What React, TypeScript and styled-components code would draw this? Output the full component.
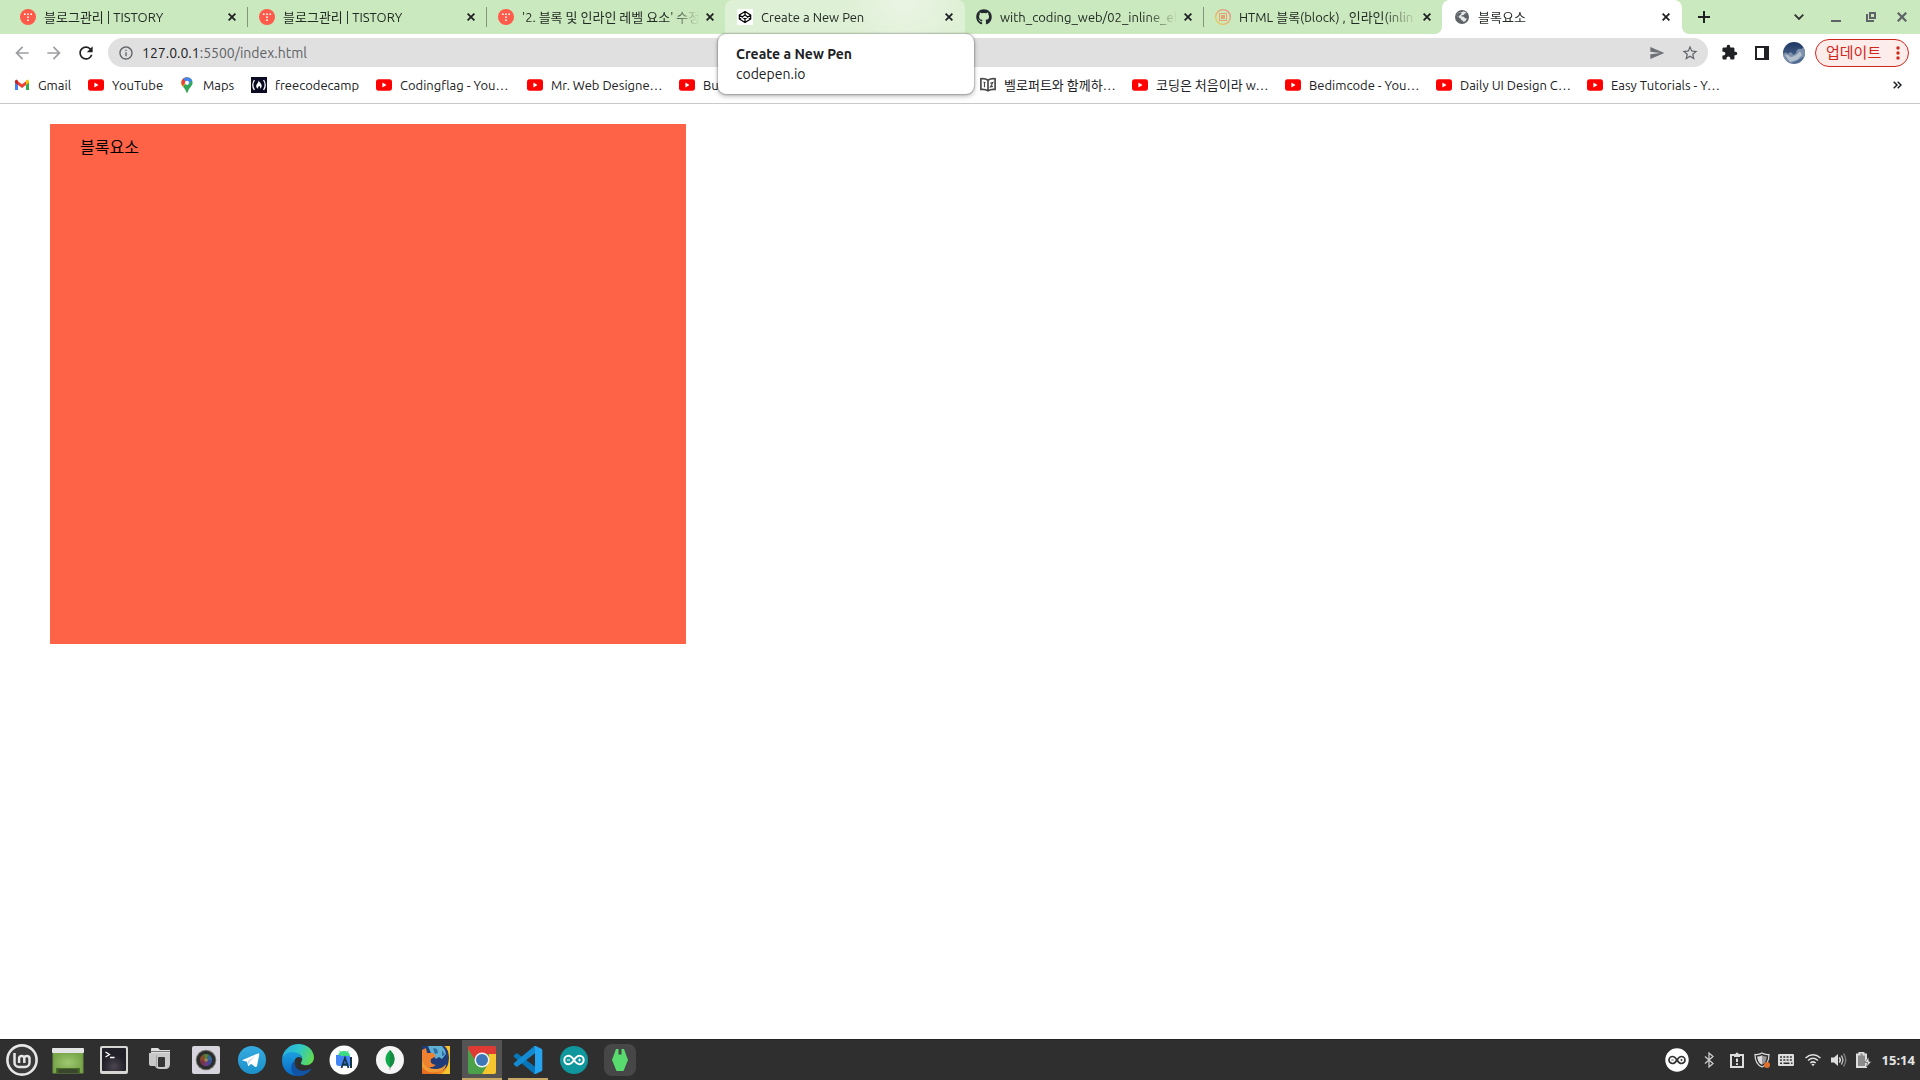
import React from "react";
import styled, { createGlobalStyle, css } from "styled-components";
import { FaGithub } from "react-icons/fa";
import {
  MdArrowBack,
  MdArrowForward,
  MdRefresh,
  MdInfoOutline,
  MdSend,
  MdStarBorder,
  MdExtension,
} from "react-icons/md";

const uiFont = `Ubuntu, "Noto Sans", "Noto Sans CJK KR", sans-serif`;

const GlobalStyle = createGlobalStyle`
  *, *::before, *::after { box-sizing: border-box; }
  body { margin: 0; background: #fff; font-family: ${uiFont}; color: #202124; overflow: hidden; }
  button { margin: 0; padding: 0; border: 0; background: none; color: inherit; font: inherit; }
  a { color: inherit; text-decoration: none; }
  svg { display: block; flex: none; }
`;

const Desktop = styled.div`
  display: flex;
  flex-direction: column;
  min-height: 100vh;
`;

/* ---------- tab strip ---------- */

const TabStrip = styled.header`
  display: flex;
  align-items: stretch;
  height: 34px;
  padding-left: 8px;
  background: #cbe9be;
`;

type TabState = "idle" | "hover" | "active";

const tabStates = {
  idle: css``,
  hover: css`
    background: radial-gradient(circle at 75% 0, #ebf5e4 0, #def0d6 60px);
  `,
  active: css`
    background: #fff;
    &::before,
    &::after {
      content: "";
      position: absolute;
      bottom: 0;
      width: 8px;
      height: 8px;
    }
    &::before {
      right: 100%;
      background: radial-gradient(circle at 0 0, transparent 8px, #fff 8px);
    }
    &::after {
      left: 100%;
      background: radial-gradient(circle at 100% 0, transparent 8px, #fff 8px);
    }
  `,
};

const TabItem = styled.div<{ $state: TabState; $divider?: boolean }>`
  position: relative;
  display: flex;
  align-items: center;
  gap: 2px;
  flex: 0 1 240px;
  min-width: 0;
  margin-right: -1px;
  padding: 0 8px 0 12px;
  border-radius: 8px 8px 0 0;
  ${(p) => tabStates[p.$state]}
  ${(p) =>
    p.$divider &&
    css`
      border-radius: 0;
      background: linear-gradient(#82967a, #82967a) right center / 1px 20px no-repeat;
    `}
`;

const TabButton = styled.button`
  display: flex;
  align-items: center;
  gap: 8px;
  flex: 1;
  min-width: 0;
  height: 34px;
  text-align: left;
  font-size: 13px;
  line-height: 18px;
  color: #232a24;
`;

const TabTitle = styled.span`
  flex: 1;
  min-width: 0;
  overflow: hidden;
  white-space: nowrap;
  mask-image: linear-gradient(to left, transparent, #000 32px);
`;

const IconButton = styled.button<{ $size: number; $color?: string }>`
  display: grid;
  place-items: center;
  flex: none;
  width: ${(p) => p.$size}px;
  height: ${(p) => p.$size}px;
  color: ${(p) => p.$color ?? "#202124"};
`;

const NewTab = styled.div`
  display: flex;
  align-items: center;
  padding-left: 9px;
`;

const WindowControls = styled.div`
  display: flex;
  align-items: center;
  gap: 1px;
  margin-left: auto;
  padding-right: 2px;
`;

const HoverCard = styled.div`
  position: absolute;
  top: 34px;
  left: -7px;
  z-index: 2;
  width: 256px;
  padding: 10px 18px;
  border-radius: 8px;
  background: #fff;
  box-shadow: 0 0 2px rgba(0, 0, 0, 0.6), 0 2px 5px rgba(0, 0, 0, 0.3);
  font-size: 14px;
  line-height: 20px;
  white-space: nowrap;
`;

const CardTitle = styled.strong`
  display: block;
`;

/* ---------- toolbar ---------- */

const Toolbar = styled.nav`
  display: flex;
  align-items: center;
  height: 37px;
  padding: 0 11px 0 6px;
`;

const AddressBar = styled.form`
  display: flex;
  align-items: center;
  flex: 1;
  height: 29px;
  margin: 0 5px 0 6px;
  padding: 0 2px 0 10px;
  border-radius: 15px;
  background: #e0e0e0;
  font-size: 14px;
  line-height: 18px;
  color: #5f6368;
`;

const Host = styled.label`
  margin-left: 8px;
  color: #202124;
`;

const AddressInput = styled.input`
  flex: 1;
  min-width: 0;
  height: 18px;
  padding: 0;
  border: 0;
  outline: 0;
  background: none;
  font: inherit;
  color: inherit;
`;

const UpdateButton = styled.button`
  display: flex;
  align-items: center;
  justify-content: space-between;
  width: 94px;
  height: 28px;
  margin-left: 5px;
  padding: 0 8px 0 10px;
  border: 1px solid #d0271d;
  border-radius: 14px;
  background: #fcecea;
  color: #d0271d;
  font-size: 15px;
  line-height: 20px;
`;

/* ---------- bookmarks ---------- */

const Bookmarks = styled.nav`
  display: flex;
  align-items: center;
  height: 33px;
  padding: 0 13px 4px 14px;
  border-bottom: 1px solid #c9c9c9;
`;

const Bookmark = styled.a<{ $width: number }>`
  display: flex;
  align-items: center;
  gap: 8px;
  flex: 0 0 ${(p) => p.$width}px;
  font-size: 13px;
  line-height: 18px;
  white-space: nowrap;
`;

const Overflow = styled(IconButton)`
  margin-left: auto;
`;

/* ---------- page ---------- */

const Page = styled.main`
  flex: 1;
  padding: 20px 50px;
`;

const Block = styled.div`
  width: 636px;
  height: 520px;
  padding: 10px 30px;
  background: tomato;
  color: #000;
  font-size: 16px;
  line-height: 26px;
`;

/* ---------- taskbar ---------- */

const Taskbar = styled.footer`
  display: flex;
  align-items: stretch;
  height: 41px;
  border-top: 1px solid #242424;
  background: #2f2f2f;
`;

const Launchers = styled.div`
  display: flex;
  gap: 6px;
  padding-left: 2px;
`;

const Launcher = styled.button<{ $open?: boolean; $focused?: boolean }>`
  display: grid;
  place-items: center;
  width: 40px;
  height: 40px;
  background: ${(p) => (p.$focused ? "#545454" : "none")};
  box-shadow: ${(p) => (p.$open ? "inset 0 -2px #c8a767" : "none")};
`;

const Tray = styled.div`
  display: flex;
  align-items: center;
  margin-left: auto;
  padding-right: 5px;
`;

const TrayButton = styled.button<{ $width: number }>`
  display: grid;
  place-items: center;
  width: ${(p) => p.$width}px;
  height: 40px;
`;

const Clock = styled.time`
  margin-left: 5px;
  color: #e4e4e4;
  font-family: "Noto Sans", sans-serif;
  font-size: 13px;
  font-weight: 700;
  line-height: 18px;
`;

/* ---------- drawings ---------- */

const Close = ({ s = 8, w = 1.8 }: { s?: number; w?: number }) => (
  <svg width={s} height={s} viewBox="0 0 8 8">
    <path d="M.6.6l6.8 6.8M7.4.6L.6 7.4" stroke="currentColor" strokeWidth={w} />
  </svg>
);

const Tistory = () => (
  <svg width="16" height="16" viewBox="0 0 16 16">
    <circle cx="8" cy="8" r="8" fill="#ff5a4a" />
    <g fill="#fff">
      <circle cx="4.8" cy="5.2" r=".9" />
      <circle cx="8" cy="5.2" r=".9" />
      <circle cx="11.2" cy="5.2" r=".9" />
      <circle cx="8" cy="8.2" r=".9" />
      <circle cx="8" cy="11.2" r=".9" />
    </g>
  </svg>
);

const CodepenIcon = () => (
  <svg width="16" height="16" viewBox="0 0 16 16">
    <rect width="16" height="16" rx="1" fill="#fff" />
    <path
      d="M8 2.4l5.7 3.7v3.8L8 13.6 2.3 9.9V6.1zM8 2.4v3.7M8 9.9v3.7M2.3 6.1L8 9.9l5.7-3.8M2.3 9.9L8 6.1l5.7 3.8"
      fill="none"
      stroke="#000"
      strokeWidth="1.2"
      strokeLinejoin="round"
    />
  </svg>
);

const Globe = () => (
  <svg width="16" height="16" viewBox="0 0 16 16">
    <circle cx="8" cy="8" r="7" fill="#5f6368" />
    <path
      d="M9 2.5q2.500-.2 3.500 1.500Q10.500 4 10 5.500 9.500 6.500 8 6.300 6.800 6.500 7.500 7.500q2.500-.5 3 1 .3 1.200 2.500.8-.7 2.700-3.500 3.700-.3-1.500-1.700-1.700-1-.2-.8-1.600Q5.500 9 4.500 8L2.600 6.800Q3 4 5.500 2.900 7 4.500 9 2.500z"
      fill="#fff"
      opacity=".85"
    />
    <path d="M4.500 3.800Q7 3 7.500 5 5.500 6 4.500 8L2.300 6.500z" fill="#5f6368" />
  </svg>
);

const BlogIcon = () => (
  <svg width="16" height="16" viewBox="0 0 16 16">
    <defs>
      <linearGradient id="blog" x1="1" y1="0" x2="0" y2="1">
        <stop offset="0" stopColor="#e8808a" />
        <stop offset="1" stopColor="#e8d44c" />
      </linearGradient>
    </defs>
    <circle cx="8" cy="8" r="7.4" fill="none" stroke="url(#blog)" strokeWidth="1.2" />
    <rect x="4.5" y="4.5" width="7" height="7" fill="none" stroke="#e9a06f" />
    <rect x="6" y="6" width="4" height="4" fill="#e9a06f" />
  </svg>
);

const YouTube = () => (
  <svg width="16" height="16" viewBox="0 0 16 16">
    <rect y="2.3" width="16" height="11.4" rx="2.6" fill="red" />
    <path d="M6.4 5.6v4.8L10.5 8z" fill="#fff" />
  </svg>
);

const Gmail = () => (
  <svg width="16" height="16" viewBox="0 0 16 16">
    <path d="M1 4.2V13h3V7z" fill="#4285f4" />
    <path d="M12 7v6h3V4.2z" fill="#34a853" />
    <path d="M12 4.5V8l3-2.3V4.4c0-1.5-1.6-2-2.5-1.3z" fill="#fbbc04" />
    <path d="M1 5.7L4 8V4.5l-.5-1.4C2.5 2.4 1 2.9 1 4.4z" fill="#c5221f" />
    <path d="M4 8V4.2l4 3 4-3V8l-4 3z" fill="#ea4335" />
  </svg>
);

const Maps = () => (
  <svg width="16" height="16" viewBox="0 0 16 16">
    <defs>
      <clipPath id="pin">
        <path d="M8 .2a5.6 5.6 0 0 1 5.6 5.6C13.6 9.2 10 10.5 8.7 15.3q-.7 1-1.4 0C6 10.5 2.4 9.2 2.4 5.8A5.6 5.6 0 0 1 8 .2z" />
      </clipPath>
    </defs>
    <g clipPath="url(#pin)">
      <rect width="16" height="16" fill="#34a853" />
      <path d="M0 13L14 0H0z" fill="#fbbc04" />
      <path d="M0 7.5L3.5 9 8 4V0H0z" fill="#ea4335" />
      <path d="M4 1.5L8 6l8-4V0H4z" fill="#4285f4" />
      <path d="M11 2l-4 5 1 2 4-4z" fill="#4285f4" />
    </g>
    <circle cx="8" cy="5.8" r="2.1" fill="#fff" />
  </svg>
);

const FreeCodeCamp = () => (
  <svg width="16" height="16" viewBox="0 0 16 16">
    <rect width="16" height="16" fill="#0a0a23" />
    <path d="M3.4 3Q.2 8 3.4 13M12.6 3q3.2 5 0 10" fill="none" stroke="#fff" strokeWidth="1.3" />
    <path d="M7.4 3.5c1 2 3.3 2.8 3.3 5.3 0 1.5-.8 2.5-1.7 3 .6-1.2 0-2.3-.9-3-.4 1-1.5 1.6-.9 3-1.3-.4-2-1.6-2-2.8 0-2 2.6-3 2.2-5.5z" fill="#fff" />
  </svg>
);

const Book = () => (
  <svg width="16" height="16" viewBox="0 0 16 16">
    <path d="M8 3.2C6 1.8 3.5 1.5.9 1.8v10.6c2.6-.3 5 0 7.1 1.3 2.1-1.3 4.5-1.6 7.1-1.3V1.8C12.5 1.5 10 1.8 8 3.2zm0 0v10.5" fill="none" stroke="#4a4a4a" strokeWidth="1.7" />
    <path d="M3.5 5l2 .8M4.5 5.5v4.8M10.3 6.2l2.5-.8-2.3 4.5 2.5-.5" fill="none" stroke="#4a4a4a" strokeWidth="1.2" />
  </svg>
);

const SidePanel = () => (
  <svg width="14" height="14" viewBox="0 0 14 14">
    <path fillRule="evenodd" d="M0 0h14v14H0zM2 2v10h7V2z" fill="currentColor" />
  </svg>
);

const Avatar = () => (
  <svg width="22" height="22" viewBox="0 0 22 22">
    <defs>
      <linearGradient id="sky" x2="0" y2="1">
        <stop offset="0" stopColor="#1d3763" />
        <stop offset="1" stopColor="#587399" />
      </linearGradient>
      <filter id="soft">
        <feGaussianBlur stdDeviation=".6" />
      </filter>
      <clipPath id="face">
        <circle cx="11" cy="11" r="11" />
      </clipPath>
    </defs>
    <g clipPath="url(#face)">
      <rect width="22" height="22" fill="url(#sky)" />
      <g filter="url(#soft)">
        <path d="M0 12q3-3 5 0 2-3 4-1 1 3 4 0 1-5 5-4l4-2v9l-7 4-7 3-8-3z" fill="#7b8fab" />
        <path d="M2 13q3-1 5 2 3 0 6-2t4-4l2 4-5 5-7 2z" fill="#b3bfcd" />
      </g>
    </g>
  </svg>
);

const Mint = () => (
  <svg width="32" height="32" viewBox="0 0 32 32">
    <circle cx="16" cy="16" r="14.6" fill="#3a3a3a" stroke="#e6e6e6" strokeWidth="2.6" />
    <path d="M8.5 9v9.5a4.5 4.5 0 0 0 4.5 4.5h6a4.5 4.5 0 0 0 4.5-4.5V14a2.7 2.7 0 0 0-5.2 0v5M18.3 14a2.7 2.7 0 0 0-5.2 0v5" fill="none" stroke="#e6e6e6" strokeWidth="2.5" />
  </svg>
);

const ShowDesktop = () => (
  <svg width="32" height="32" viewBox="0 0 32 32">
    <defs>
      <radialGradient id="wall">
        <stop offset="0" stopColor="#9fc873" />
        <stop offset="1" stopColor="#79a64a" />
      </radialGradient>
    </defs>
    <rect x="1" y="8" width="30" height="21" fill="url(#wall)" stroke="#6c9344" />
    <rect y="4" width="32" height="5" rx="1" fill="#e4e4e4" />
    <path d="M4 29v-5h24v5h-2v-3H6v3z" fill="#476d27" />
    <rect x="6" y="25" width="20" height="4" fill="#39482c" />
  </svg>
);

const Terminal = () => (
  <svg width="30" height="30" viewBox="0 0 30 30">
    <defs>
      <radialGradient id="term" cy=".8">
        <stop offset="0" stopColor="#4b4550" />
        <stop offset="1" stopColor="#211f27" />
      </radialGradient>
    </defs>
    <rect x="1" y="1" width="28" height="28" rx="2" fill="#d6d6d3" />
    <rect x="3" y="3" width="24" height="23" rx="1" fill="url(#term)" />
    <path d="M6.5 7l4 2.5-4 2.5M11 12.5h4.5" fill="none" stroke="#fff" strokeWidth="1.3" />
  </svg>
);

const Files = () => (
  <svg width="24" height="24" viewBox="0 0 24 24">
    <path d="M3 3V1q0-1 1-1h6l2 2h10v5H3z" fill="#e0e0e0" />
    <path d="M2.5 3.5H22" stroke="#777" />
    <path d="M1 5h21v11q0 5-5 5h-5q-4 0-5-3H3q-2 0-2-2z" fill="#c9c9c9" />
    <rect x="10" y="9" width="7" height="10" rx="1" fill="#353535" />
    <path d="M8.5 7v12" stroke="#a5a5a5" />
  </svg>
);

const Camera = () => (
  <svg width="30" height="30" viewBox="0 0 30 30">
    <rect x="1" y="1" width="28" height="28" rx="2" fill="#d8d4dd" />
    <circle cx="15" cy="15" r="10.3" fill="#74776f" />
    <circle cx="15" cy="15" r="9.3" fill="#2b2d2c" />
    <circle cx="15" cy="15" r="6" fill="#3a3f5c" />
    <path d="M15 15L12 9.800a6 6 0 0 1 6 0z" fill="#5a7f38" />
    <path d="M15 15l3-5.200a6 6 0 0 1 3 5.200z" fill="#37698f" />
    <path d="M15 15h6a6 6 0 0 1-3 5.200z" fill="#3e4a92" />
    <path d="M15 15l3 5.200a6 6 0 0 1-6 0z" fill="#6d3a84" />
    <path d="M15 15l-3 5.200A6 6 0 0 1 9 15z" fill="#7f3241" />
    <path d="M15 15H9a6 6 0 0 1 3-5.200z" fill="#8a4a28" />
    <circle cx="15" cy="15" r="1.8" fill="#9c8a4c" />
  </svg>
);

const Telegram = () => (
  <svg width="30" height="30" viewBox="0 0 30 30">
    <defs>
      <linearGradient id="tg" x2="0" y2="1">
        <stop offset="0" stopColor="#36abe0" />
        <stop offset="1" stopColor="#1b91cc" />
      </linearGradient>
    </defs>
    <circle cx="15" cy="15" r="14" fill="url(#tg)" />
    <path d="M5.5 15L21 8.4q1.5-.4 1.3 1.2L20 21q-.5 1.7-2 .8l-4-3-2.2 2.1q-.8.5-.8-.4l-1-3.8-4.3-1.3q-1.2-.3-.2-.4z" fill="#fff" />
    <path d="M11.3 20.3L10.6 16l7.8-5-5.8 6z" fill="#c8daea" />
  </svg>
);

const Edge = () => (
  <svg width="32" height="32" viewBox="0 0 32 32">
    <defs>
      <linearGradient id="eTop" x1="0" y1=".3" x2="1" y2=".6">
        <stop offset="0" stopColor="#2aaee5" />
        <stop offset=".5" stopColor="#2fc9c6" />
        <stop offset="1" stopColor="#62dc4e" />
      </linearGradient>
      <linearGradient id="eLow" x2="0" y2="1">
        <stop offset="0" stopColor="#1ba0df" />
        <stop offset="1" stopColor="#0b67c4" />
      </linearGradient>
    </defs>
    <path d="M0 15C1 6 8 0 16.5 0 26 0 32 7 32 13.5c0 4.5-3.6 7.7-8.3 7.7-4 0-5.5-1.5-4.5-2.9 3-4.3-.5-9.2-7-9.2C6 9.1 1.5 12 0 15z" fill="url(#eTop)" />
    <path d="M0 16c.5-4.5 5-8 10.5-8 5.5 0 9.5 3 9.5 7-2-3-6.5-2.5-7.5 2-1.2 5.5 3.5 11.5 9 11.5-2.5 2.5-5 3.5-8 3.2C5.5 31 0 25 0 16z" fill="url(#eLow)" />
    <path d="M12.5 17c-1.5 8 7 12.5 15.5 8q1.8-.8.9.8C25 31.5 18 33 13.5 31.7 7 27 9 19 12.5 17z" fill="#1254a4" />
  </svg>
);

const AndroidStudio = () => (
  <svg width="30" height="30" viewBox="0 0 30 30">
    <circle cx="15" cy="15" r="14.5" fill="#fff" />
    <path d="M9 11a6 5 0 0 1 12 0z" fill="#3ddc84" />
    <path d="M10.5 5.5l1.5 2M19.5 5.5L18 7.5" stroke="#3ddc84" />
    <path d="M7 10h4l1 1h9v10H10q-3 0-3-3z" fill="#4285f4" />
    <path d="M12.5 23l3.5-10 3.5 10M14 19.500h4" fill="none" stroke="#173644" strokeWidth="1.8" />
    <path d="M22 12v11" stroke="#173644" strokeWidth="2" />
  </svg>
);

const Mongo = () => (
  <svg width="30" height="30" viewBox="0 0 30 30">
    <circle cx="15" cy="15" r="14" fill="#f5f5f5" />
    <path d="M15 5c6 5.500 6 12.500 0 18-6-5.500-6-12.500 0-18z" fill="#10a94b" />
    <path d="M15 5c6 5.500 6 12.500 0 18z" fill="#168a43" />
    <path d="M15 22v3" stroke="#aaa" />
  </svg>
);

const Firefox = () => (
  <svg width="30" height="30" viewBox="0 0 30 30">
    <defs>
      <linearGradient id="fox" x2="1" y2="1">
        <stop offset="0" stopColor="#ee7d2a" />
        <stop offset=".7" stopColor="#e86a1c" />
        <stop offset="1" stopColor="#f5c02f" />
      </linearGradient>
    </defs>
    <rect x="1" y="1" width="28" height="28" rx="1" fill="url(#fox)" />
    <path d="M1 1h22q5 3 5 12 0 13-12 13-7 0-9-8L1 6z" fill="#1f3c78" />
    <path d="M7 1h14q3 3 4 8l-4 5-3-2-3 2-5-6z" fill="#5fb0d2" />
    <path d="M12 3l4 1 1 4-3 1zM21 5l3 5-3 1z" fill="#2c6ea5" />
    <path d="M1 5l4-2 1 5 6 0 3 3-5 3q-2 5 5 6-5 4-10 1L1 17z" fill="#ef8230" />
    <path d="M1 15q3 9 13 9 8 0 11-5 0 5-5 7-10 4-16-1L1 22z" fill="#f39a35" />
    <path d="M24 1h5v28h-8q7-6 7-16 0-8-4-12z" fill="#f3c52f" />
  </svg>
);

const Chrome = () => (
  <svg width="30" height="30" viewBox="0 0 30 30">
    <rect x="1" y="1" width="28" height="28" rx="2" fill="#4aa14a" />
    <path d="M15 29l6-10 1-10h7v18q0 2-2 2z" fill="#f7c62f" />
    <path d="M1 4V3q0-2 2-2h24q2 0 2 2v6H15L8 15z" fill="#df3b34" />
    <circle cx="15" cy="15" r="7.5" fill="#f3f3f3" />
    <circle cx="15" cy="15" r="6" fill="#3d77b8" />
  </svg>
);

const VSCode = () => (
  <svg width="30" height="30" viewBox="0 0 30 30">
    <path d="M1 10.3l2-1.8q.8-.6 1.6 0L22 21.7V29q-.8 0-1.5-.7L1 12q-.8-.8 0-1.7z" fill="#0877b9" />
    <path d="M1 19.7l2 1.8q.8.6 1.6 0L22 8.3V1q-.8 0-1.5.7L1 18q-.8.8 0 1.7z" fill="#128bd3" />
    <path d="M21 1.3q.8-.5 1.7-.2l5.7 2.7q.9.5.9 1.5v19.4q0 1-.9 1.5l-5.7 2.7q-.9.3-1.7-.2 1-.2 1-1.5V2.8q0-1.3-1-1.5z" fill="#25a5ef" />
  </svg>
);

const Arduino = () => (
  <svg width="30" height="30" viewBox="0 0 30 30">
    <circle cx="15" cy="15" r="14" fill="#10979d" />
    <path d="M15 15c-2-3-3.5-4.2-5.5-4.2a4.2 4.2 0 0 0 0 8.4c2 0 3.5-1.2 5.5-4.2s3.5-4.2 5.5-4.2a4.2 4.2 0 0 1 0 8.4c-2 0-3.5-1.2-5.5-4.2z" fill="none" stroke="#fff" strokeWidth="2" />
    <path d="M8 15h3M19 15h3M20.5 13.5v3" stroke="#fff" />
  </svg>
);

const GreenApp = () => (
  <svg width="32" height="32" viewBox="0 0 32 32">
    <rect width="32" height="32" rx="8" fill="#474747" />
    <path d="M12 5h2.5v5.5h3V5H20l4 11-4.5 11h-7L8 16z" fill="#58dc6e" />
  </svg>
);

const TrayArduino = () => (
  <svg width="24" height="24" viewBox="0 0 24 24">
    <circle cx="12" cy="12" r="11.7" fill="#fff" />
    <path d="M12 12c-1.5-2.5-2.8-3.5-4.5-3.5a3.5 3.5 0 0 0 0 7c1.7 0 3-1 4.5-3.5s2.8-3.5 4.5-3.5a3.5 3.5 0 0 1 0 7c-1.7 0-3-1-4.5-3.5z" fill="none" stroke="#333" strokeWidth="1.7" />
    <path d="M6.3 12h2.4M15.3 12h2.4M16.5 10.8v2.4" stroke="#333" strokeWidth=".8" />
  </svg>
);

const Bluetooth = () => (
  <svg width="16" height="16" viewBox="0 0 16 16">
    <path d="M4 4.5l8 7L8 15V1l4 3.5-8 7" fill="none" stroke="#ccc" strokeWidth="1.3" />
  </svg>
);

const Clipboard = () => (
  <svg width="16" height="16" viewBox="0 0 16 16">
    <path d="M2 3h12v12H2z" fill="none" stroke="#dedede" strokeWidth="2" />
    <path d="M5 2h1.5a1.5 1.5 0 0 1 3 0H11v3H5z" fill="#dedede" />
    <path d="M8 6.5V10M8 11.2v1.8" stroke="#dedede" strokeWidth="2" />
  </svg>
);

const Shield = () => (
  <svg width="16" height="16" viewBox="0 0 16 16">
    <path d="M8 1q3 2 7 1.5Q15 12 8 15 1 12 1 2.5 5 3 8 1z" fill="none" stroke="#dedede" strokeWidth="1.2" />
    <path d="M8 3.2q2 1.3 4.8 1.3Q12.5 10.5 8 12.8z" fill="#999" />
    <path d="M8 3.2Q6 4.5 3.2 4.5 3.5 10.5 8 12.8z" fill="#dedede" />
    <circle cx="13" cy="13" r="3" fill="#e0702f" />
  </svg>
);

const Keyboard = () => (
  <svg width="16" height="16" viewBox="0 0 16 16">
    <rect y="2" width="16" height="12" rx="1" fill="#dedede" />
    <path d="M2 5h12M2 8h12" stroke="#333" strokeWidth="1.6" strokeDasharray="2 1.3" />
    <path d="M2 11.2h2M5.5 11.2h6M13 11.2h1.5" stroke="#333" strokeWidth="1.5" />
  </svg>
);

const Wifi = () => (
  <svg width="16" height="16" viewBox="0 0 16 16">
    <path d="M.5 6q7.5-6.5 15 0M3 8.5q5-4.5 10 0M5.3 11q2.7-2.3 5.4 0" fill="none" stroke="#dedede" strokeWidth="1.5" />
    <path d="M6.3 12.3q1.7-1.2 3.4 0L8 14.3z" fill="#dedede" />
  </svg>
);

const Volume = () => (
  <svg width="16" height="16" viewBox="0 0 16 16">
    <path d="M0 5.5h3L7 2v12l-4-3.5H0z" fill="#dedede" />
    <path d="M8.3 5.5q2 2.5 0 5" fill="none" stroke="#dedede" strokeWidth="1.4" />
    <path d="M10.3 3.5q3.2 4.5 0 9" fill="none" stroke="#bbb" strokeWidth="1.4" />
    <path d="M12.5 1.5q4.5 6.5 0 13" fill="none" stroke="#777" strokeWidth="1.5" />
  </svg>
);

const Battery = () => (
  <svg width="16" height="16" viewBox="0 0 16 16">
    <path d="M1 2.5h2.5V.5h4v2H10V15H1z" fill="#8b8b8b" stroke="#dedede" strokeWidth="2" />
    <path d="M12.5 5L9 10.5h2.5L10.5 15l5-5.5H13z" fill="#dedede" stroke="#2f2f2f" strokeWidth=".5" />
  </svg>
);

/* ---------- data ---------- */

type TabData = { title: string; icon: React.ReactNode; state?: TabState; divider?: boolean };

const tabs: TabData[] = [
  { title: "블로그관리 | TISTORY", icon: <Tistory />, divider: true },
  { title: "블로그관리 | TISTORY", icon: <Tistory />, divider: true },
  { title: "'2. 블록 및 인라인 레벨 요소' 수정", icon: <Tistory /> },
  { title: "Create a New Pen", icon: <CodepenIcon />, state: "hover" },
  { title: "with_coding_web/02_inline_el", icon: <FaGithub size={16} color="#24292f" />, divider: true },
  { title: "HTML 블록(block) , 인라인(inlin", icon: <BlogIcon /> },
  { title: "블록요소", icon: <Globe />, state: "active" },
];

const bookmarks: { label: string; icon: React.ReactNode; width: number }[] = [
  { label: "Gmail", icon: <Gmail />, width: 74 },
  { label: "YouTube", icon: <YouTube />, width: 91 },
  { label: "Maps", icon: <Maps />, width: 72 },
  { label: "freecodecamp", icon: <FreeCodeCamp />, width: 125 },
  { label: "Codingflag - You…", icon: <YouTube />, width: 151 },
  { label: "Mr. Web Designe…", icon: <YouTube />, width: 152 },
  { label: "Bu", icon: <YouTube />, width: 301 },
  { label: "벨로퍼트와 함께하…", icon: <Book />, width: 152 },
  { label: "코딩은 처음이라 w…", icon: <YouTube />, width: 153 },
  { label: "Bedimcode - You…", icon: <YouTube />, width: 151 },
  { label: "Daily UI Design C…", icon: <YouTube />, width: 151 },
  { label: "Easy Tutorials - Y…", icon: <YouTube />, width: 151 },
];

const launchers: { name: string; icon: React.ReactNode; open?: boolean; focused?: boolean }[] = [
  { name: "Menu", icon: <Mint /> },
  { name: "Show desktop", icon: <ShowDesktop /> },
  { name: "Terminal", icon: <Terminal /> },
  { name: "Files", icon: <Files /> },
  { name: "Camera", icon: <Camera /> },
  { name: "Telegram", icon: <Telegram /> },
  { name: "Edge", icon: <Edge /> },
  { name: "Android Studio", icon: <AndroidStudio /> },
  { name: "MongoDB Compass", icon: <Mongo /> },
  { name: "Firefox", icon: <Firefox /> },
  { name: "Chrome", icon: <Chrome />, open: true, focused: true },
  { name: "Visual Studio Code", icon: <VSCode />, open: true },
  { name: "Arduino", icon: <Arduino /> },
  { name: "Green app", icon: <GreenApp /> },
];

const tray: { name: string; icon: React.ReactNode; width: number }[] = [
  { name: "Arduino", icon: <TrayArduino />, width: 32 },
  { name: "Bluetooth", icon: <Bluetooth />, width: 32 },
  { name: "Notes", icon: <Clipboard />, width: 25 },
  { name: "Updates", icon: <Shield />, width: 24 },
  { name: "Keyboard", icon: <Keyboard />, width: 25 },
  { name: "Network", icon: <Wifi />, width: 28 },
  { name: "Volume", icon: <Volume />, width: 25 },
  { name: "Power", icon: <Battery />, width: 25 },
];

export default function App() {
  return (
    <Desktop>
      <GlobalStyle />
      <TabStrip>
        {tabs.map((t, i) => (
          <TabItem key={i} $state={t.state ?? "idle"} $divider={t.divider}>
            <TabButton type="button">
              {t.icon}
              <TabTitle>{t.title}</TabTitle>
            </TabButton>
            <IconButton $size={16} aria-label="Close tab">
              <Close />
            </IconButton>
            {t.state === "hover" && (
              <HoverCard role="tooltip">
                <CardTitle>Create a New Pen</CardTitle>
                codepen.io
              </HoverCard>
            )}
          </TabItem>
        ))}
        <NewTab>
          <IconButton $size={28} aria-label="New tab">
            <svg width="12" height="12" viewBox="0 0 12 12">
              <path d="M6 0v12M0 6h12" stroke="currentColor" strokeWidth="2" />
            </svg>
          </IconButton>
        </NewTab>
        <WindowControls>
          <IconButton $size={32} aria-label="Search tabs">
            <svg width="10" height="6" viewBox="0 0 10 6">
              <path d="M.7.7L5 5 9.3.7" fill="none" stroke="#333" strokeWidth="1.8" />
            </svg>
          </IconButton>
          <IconButton $size={40} $color="#5f6368" aria-label="Minimize">
            <svg width="10" height="10" viewBox="0 0 10 10">
              <path d="M0 9h10" stroke="currentColor" strokeWidth="2" />
            </svg>
          </IconButton>
          <IconButton $size={28} $color="#5f6368" aria-label="Restore">
            <svg width="10" height="10" viewBox="0 0 10 10">
              <path d="M4 1h5v5H4zM1 2v7h7" fill="none" stroke="currentColor" strokeWidth="2" />
            </svg>
          </IconButton>
          <IconButton $size={32} $color="#5f6368" aria-label="Close window">
            <Close s={10} />
          </IconButton>
        </WindowControls>
      </TabStrip>

      <Toolbar>
        <IconButton $size={32} $color="#9c9ea1" aria-label="Back">
          <MdArrowBack size={20} />
        </IconButton>
        <IconButton $size={32} $color="#9c9ea1" aria-label="Forward">
          <MdArrowForward size={20} />
        </IconButton>
        <IconButton $size={32} aria-label="Reload">
          <MdRefresh size={20} />
        </IconButton>
        <AddressBar>
          <MdInfoOutline size={16} />
          <Host htmlFor="address">127.0.0.1</Host>
          <AddressInput id="address" defaultValue=":5500/index.html" />
          <IconButton type="button" $size={33} $color="#6e7175" aria-label="Send">
            <MdSend size={16} />
          </IconButton>
          <IconButton type="button" $size={33} $color="#5f6368" aria-label="Bookmark">
            <MdStarBorder size={18} />
          </IconButton>
        </AddressBar>
        <IconButton $size={33} aria-label="Extensions">
          <MdExtension size={17} />
        </IconButton>
        <IconButton $size={32} aria-label="Side panel">
          <SidePanel />
        </IconButton>
        <IconButton $size={32} aria-label="Profile">
          <Avatar />
        </IconButton>
        <UpdateButton>
          업데이트
          <svg width="4" height="14" viewBox="0 0 4 14">
            <g fill="currentColor">
              <circle cx="2" cy="2" r="1.7" />
              <circle cx="2" cy="7" r="1.7" />
              <circle cx="2" cy="12" r="1.7" />
            </g>
          </svg>
        </UpdateButton>
      </Toolbar>

      <Bookmarks>
        {bookmarks.map((b) => (
          <Bookmark key={b.label} href="#" $width={b.width}>
            {b.icon}
            {b.label}
          </Bookmark>
        ))}
        <Overflow $size={20} aria-label="More bookmarks">
          <svg width="9" height="8" viewBox="0 0 9 8">
            <path d="M.7.7L4 4 .7 7.3M4.7.7L8 4 4.7 7.3" fill="none" stroke="currentColor" strokeWidth="1.5" />
          </svg>
        </Overflow>
      </Bookmarks>

      <Page>
        <Block>블록요소</Block>
      </Page>

      <Taskbar>
        <Launchers>
          {launchers.map((l) => (
            <Launcher key={l.name} aria-label={l.name} $open={l.open} $focused={l.focused}>
              {l.icon}
            </Launcher>
          ))}
        </Launchers>
        <Tray>
          {tray.map((t) => (
            <TrayButton key={t.name} aria-label={t.name} $width={t.width}>
              {t.icon}
            </TrayButton>
          ))}
          <Clock>15:14</Clock>
        </Tray>
      </Taskbar>
    </Desktop>
  );
}
